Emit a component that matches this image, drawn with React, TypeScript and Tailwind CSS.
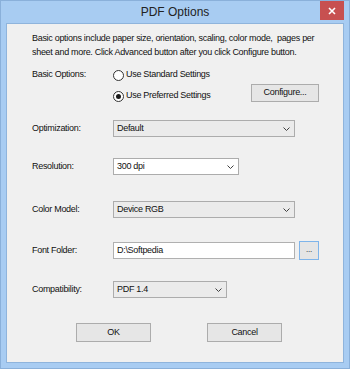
import { useState } from 'react'

const font = { fontFamily: '"Liberation Sans", Arial, sans-serif' }

function Chevron() {
  return (
    <svg width="7" height="4" viewBox="0 0 7 4" className="shrink-0">
      <path d="M0.5 0.5 L3.5 3.5 L6.5 0.5" fill="none" stroke="#404040" strokeWidth="1" />
    </svg>
  )
}

function Combo({ value, width, white }: { value: string; width: string; white?: boolean }) {
  return (
    <div
      className={`flex h-[17px] items-center justify-between border border-[#acacac] pl-[3px] pr-[4px] ${width} ${
        white ? 'bg-white' : 'bg-[#ebebeb]'
      }`}
    >
      <span>{value}</span>
      <Chevron />
    </div>
  )
}

function Radio({ checked, label, onClick }: { checked: boolean; label: string; onClick: () => void }) {
  return (
    <div className="flex h-5 items-center gap-[2px]" onClick={onClick}>
      <span className="flex h-[11px] w-[11px] items-center justify-center rounded-full border border-[#333] bg-white">
        {checked && <span className="h-[5px] w-[5px] rounded-full bg-[#1a1a1a]" />}
      </span>
      <span>{label}</span>
    </div>
  )
}

function Row({ label, children, className = '' }: { label: string; children: React.ReactNode; className?: string }) {
  return (
    <div className={`flex items-center ${className}`}>
      <div className="w-[81px] shrink-0">{label}</div>
      {children}
    </div>
  )
}

export default function App() {
  const [preferred, setPreferred] = useState(true)

  return (
    <div
      className="relative flex h-[369px] w-[350px] flex-col border border-[#8ab0da] bg-[#a8ccf2] text-[9px] tracking-[-0.3px] text-[#111]"
      style={font}
    >
      {/* title bar */}
      <div className="relative flex h-[22px] shrink-0 items-center justify-center">
        <span className="text-[12px] tracking-normal text-[#222]">PDF Options</span>
        <div className="absolute right-[5px] top-0 flex h-[19px] w-[24px] items-center justify-center bg-[#c75050]">
          <svg width="8" height="8" viewBox="0 0 8 8">
            <path d="M1 1 L7 7 M7 1 L1 7" stroke="#fff" strokeWidth="1.6" />
          </svg>
        </div>
      </div>

      {/* client area */}
      <div className="relative mx-[5px] h-[340px] border border-[#8fb4dc] bg-[#f0f0f0] pl-[25px] pr-[24px] pt-[7px]">
        <p className="whitespace-nowrap leading-[14px]">
          Basic options include paper size, orientation, scaling, color mode,&nbsp; pages per
          <br />
          sheet and more. Click Advanced button after you click Configure button.
        </p>

        <div className="mt-[6px] flex">
          <div className="flex h-5 w-[81px] shrink-0 items-center">Basic Options:</div>
          <div className="flex flex-col gap-px">
            <Radio checked={!preferred} label="Use Standard Settings" onClick={() => setPreferred(false)} />
            <Radio checked={preferred} label="Use Preferred Settings" onClick={() => setPreferred(true)} />
          </div>
          <button className="mb-[4px] ml-auto flex h-[18px] w-[68px] items-center justify-center self-end border border-[#acacac] bg-[#e6e6e6]">
            Configure...
          </button>
        </div>

        <Row label="Optimization:" className="mt-[14px]">
          <Combo value="Default" width="w-[182px]" />
        </Row>

        <Row label="Resolution:" className="mt-[21px]">
          <Combo value="300 dpi" width="w-[126px]" white />
        </Row>

        <Row label="Color Model:" className="mt-[26px]">
          <Combo value="Device RGB" width="w-[182px]" />
        </Row>

        <Row label="Font Folder:" className="mt-[23px] h-[19px]">
          <div className="flex h-[17px] w-[182px] items-center border border-[#b0b0b0] bg-white pl-[3px]">D:\Softpedia</div>
          <button className="ml-auto flex h-[19px] w-[20px] items-center justify-center border border-[#7eb4ea] bg-[#e5e5e5] pb-[2px] text-[8px]">
            ...
          </button>
        </Row>

        <Row label="Compatibility:" className="mt-[21px]">
          <Combo value="PDF 1.4" width="w-[114px]" />
        </Row>

        <div className="mt-[25px] flex pl-[44px]">
          <button className="flex h-[19px] w-[75px] items-center justify-center border border-[#acacac] bg-[#e6e6e6]">OK</button>
          <button className="ml-[56px] flex h-[19px] w-[75px] items-center justify-center border border-[#acacac] bg-[#e6e6e6]">
            Cancel
          </button>
        </div>
      </div>
    </div>
  )
}
